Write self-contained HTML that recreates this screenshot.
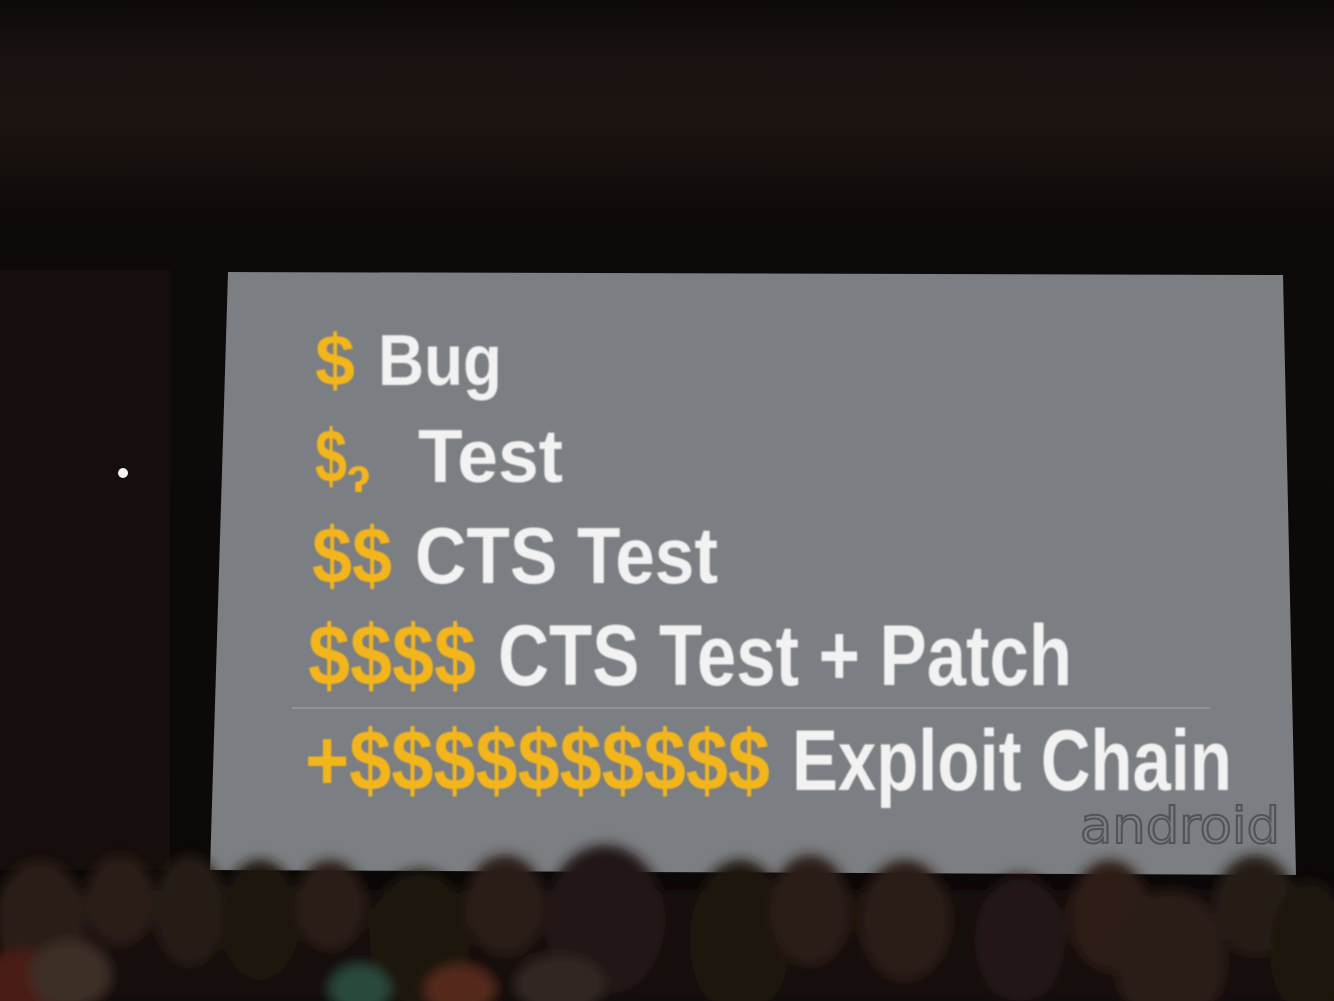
<!DOCTYPE html>
<html><head><meta charset="utf-8"><style>
html,body{margin:0;padding:0;background:#0d0908;overflow:hidden}
svg{display:block}
</style></head><body>
<svg width="1334" height="1001" viewBox="0 0 1334 1001" xmlns="http://www.w3.org/2000/svg">
<defs>
<linearGradient id="bg" x1="0" y1="0" x2="0" y2="1">
<stop offset="0" stop-color="#0c0908"/><stop offset="0.06" stop-color="#1a1210"/><stop offset="0.12" stop-color="#1c1411"/><stop offset="0.22" stop-color="#0e0a09"/><stop offset="1" stop-color="#0b0807"/>
</linearGradient>
<filter id="bl"><feGaussianBlur stdDeviation="6"/></filter>
<filter id="b1"><feGaussianBlur stdDeviation="0.8"/></filter>
</defs>
<rect width="1334" height="1001" fill="url(#bg)"/>
<rect x="0" y="270" width="170" height="600" fill="#150e0c"/>
<circle cx="123" cy="473" r="5" fill="#f4f4f4"/>
<polygon points="228,272 1283,275 1296,875 210,870" fill="#7b7e82"/>
<g font-family="Liberation Sans, sans-serif" font-weight="bold" filter="url(#b1)">
<text x="315" y="385" font-size="72" fill="#f3b51c" textLength="40" lengthAdjust="spacingAndGlyphs">$</text>
<text x="378" y="385" font-size="72" fill="#f2f2f2" textLength="124" lengthAdjust="spacingAndGlyphs">Bug</text>
<text x="315" y="482" font-size="75" fill="#f3b51c" textLength="32" lengthAdjust="spacingAndGlyphs">$</text>
<text x="347" y="492" font-size="48" fill="#f3b51c">ɂ</text>
<text x="418" y="482" font-size="75" fill="#f2f2f2" textLength="145" lengthAdjust="spacingAndGlyphs">Test</text>
<text x="312" y="583" font-size="80" fill="#f3b51c" textLength="80" lengthAdjust="spacingAndGlyphs">$$</text>
<text x="415" y="583" font-size="80" fill="#f2f2f2" textLength="303" lengthAdjust="spacingAndGlyphs">CTS Test</text>
<text x="308" y="685" font-size="86" fill="#f3b51c" textLength="168" lengthAdjust="spacingAndGlyphs">$$$$</text>
<text x="498" y="685" font-size="86" fill="#f2f2f2" textLength="574" lengthAdjust="spacingAndGlyphs">CTS Test + Patch</text>
<text x="305" y="790" font-size="86" fill="#f3b51c" textLength="465" lengthAdjust="spacingAndGlyphs">+$$$$$$$$$$</text>
<text x="792" y="790" font-size="86" fill="#f2f2f2" textLength="440" lengthAdjust="spacingAndGlyphs">Exploit Chain</text>
</g>
<line x1="292" y1="708" x2="1210" y2="708" stroke="#8f9296" stroke-width="2"/>
<text x="1080" y="843" font-family="DejaVu Sans, sans-serif" font-size="50" fill="none" stroke="#505357" stroke-width="2" textLength="200" lengthAdjust="spacingAndGlyphs">android</text>
<g filter="url(#bl)" fill="#1e1410">
<rect x="0" y="890" width="1334" height="111" fill="#120c0a"/>
<ellipse cx="40" cy="920" rx="45" ry="60" fill="#2a1c16"/>
<ellipse cx="120" cy="900" rx="35" ry="45" fill="#2c1e17"/>
<ellipse cx="190" cy="910" rx="35" ry="55" fill="#261a14"/>
<ellipse cx="260" cy="920" rx="40" ry="60"/>
<ellipse cx="330" cy="905" rx="35" ry="45" fill="#2a1c16"/>
<ellipse cx="420" cy="940" rx="50" ry="70" fill="#1f1511"/>
<ellipse cx="505" cy="905" rx="40" ry="50" fill="#2a1d16"/>
<ellipse cx="605" cy="920" rx="60" ry="75" fill="#241913"/>
<ellipse cx="740" cy="940" rx="50" ry="80" fill="#1c1310"/>
<ellipse cx="810" cy="910" rx="40" ry="55" fill="#2a1c16"/>
<ellipse cx="905" cy="920" rx="45" ry="60" fill="#2b1d16"/>
<ellipse cx="1020" cy="940" rx="45" ry="65" fill="#201612"/>
<ellipse cx="1110" cy="915" rx="40" ry="55" fill="#2d1f17"/>
<ellipse cx="1170" cy="960" rx="55" ry="70" fill="#2a1c16"/>
<ellipse cx="1255" cy="905" rx="40" ry="50" fill="#271a14"/>
<ellipse cx="1310" cy="950" rx="40" ry="70" fill="#1c1310"/>
<ellipse cx="20" cy="990" rx="45" ry="40" fill="#4a1d18"/>
<ellipse cx="70" cy="975" rx="40" ry="35" fill="#3e2e26"/>
<ellipse cx="360" cy="990" rx="30" ry="25" fill="#2a4a3c"/>
<ellipse cx="460" cy="990" rx="35" ry="25" fill="#552a1f"/>
<ellipse cx="560" cy="985" rx="45" ry="30" fill="#332824"/>
</g>
</svg>
</body></html>
